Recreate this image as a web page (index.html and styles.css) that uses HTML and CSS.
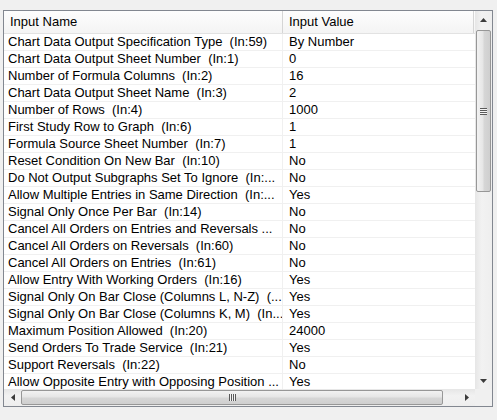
FILE: index.html
```html
<!DOCTYPE html>
<html>
<head>
<meta charset="utf-8">
<link rel="stylesheet" href="styles.css">
</head>
<body>
<div class="wrap">
  <div class="grid">
    <div class="top">
      <div class="table">
        <div class="row head">
          <div class="c1">Input Name</div>
          <div class="c2">Input Value</div>
        </div>
        <div class="row"><div class="c1">Chart Data Output Specification Type  (In:59)</div><div class="c2">By Number</div></div>
        <div class="row"><div class="c1">Chart Data Output Sheet Number  (In:1)</div><div class="c2">0</div></div>
        <div class="row"><div class="c1">Number of Formula Columns  (In:2)</div><div class="c2">16</div></div>
        <div class="row"><div class="c1">Chart Data Output Sheet Name  (In:3)</div><div class="c2">2</div></div>
        <div class="row"><div class="c1">Number of Rows  (In:4)</div><div class="c2">1000</div></div>
        <div class="row"><div class="c1">First Study Row to Graph  (In:6)</div><div class="c2">1</div></div>
        <div class="row"><div class="c1">Formula Source Sheet Number  (In:7)</div><div class="c2">1</div></div>
        <div class="row"><div class="c1">Reset Condition On New Bar  (In:10)</div><div class="c2">No</div></div>
        <div class="row"><div class="c1">Do Not Output Subgraphs Set To Ignore  (In:...</div><div class="c2">No</div></div>
        <div class="row"><div class="c1">Allow Multiple Entries in Same Direction  (In:...</div><div class="c2">Yes</div></div>
        <div class="row"><div class="c1">Signal Only Once Per Bar  (In:14)</div><div class="c2">No</div></div>
        <div class="row"><div class="c1">Cancel All Orders on Entries and Reversals ...</div><div class="c2">No</div></div>
        <div class="row"><div class="c1">Cancel All Orders on Reversals  (In:60)</div><div class="c2">No</div></div>
        <div class="row"><div class="c1">Cancel All Orders on Entries  (In:61)</div><div class="c2">No</div></div>
        <div class="row"><div class="c1">Allow Entry With Working Orders  (In:16)</div><div class="c2">Yes</div></div>
        <div class="row"><div class="c1">Signal Only On Bar Close (Columns L, N-Z)  (...</div><div class="c2">Yes</div></div>
        <div class="row"><div class="c1">Signal Only On Bar Close (Columns K, M)  (In...</div><div class="c2">Yes</div></div>
        <div class="row"><div class="c1">Maximum Position Allowed  (In:20)</div><div class="c2">24000</div></div>
        <div class="row"><div class="c1">Send Orders To Trade Service  (In:21)</div><div class="c2">Yes</div></div>
        <div class="row"><div class="c1">Support Reversals  (In:22)</div><div class="c2">No</div></div>
        <div class="row"><div class="c1">Allow Opposite Entry with Opposing Position ...</div><div class="c2">Yes</div></div>
      </div>
      <div class="vscroll">
        <div class="btn"><svg width="7" height="4" viewBox="0 0 7 4"><path d="M3.5 0 L7 4 L0 4 Z" fill="#3c3c3c"/></svg></div>
        <div class="vtrack">
          <div class="vthumb"><span class="vgrip"></span></div>
        </div>
        <div class="btn"><svg width="7" height="4" viewBox="0 0 7 4"><path d="M0 0 L7 0 L3.5 4 Z" fill="#3c3c3c"/></svg></div>
      </div>
    </div>
    <div class="bottom">
      <div class="hscroll">
        <div class="btn"><svg width="4" height="7" viewBox="0 0 4 7"><path d="M4 0 L4 7 L0 3.5 Z" fill="#3c3c3c"/></svg></div>
        <div class="htrack">
          <div class="hthumb"><span class="hgrip"></span></div>
        </div>
        <div class="btn"><svg width="4" height="7" viewBox="0 0 4 7"><path d="M0 0 L4 3.5 L0 7 Z" fill="#3c3c3c"/></svg></div>
      </div>
      <div class="corner"></div>
    </div>
  </div>
</div>
</body>
</html>
```
FILE: styles.css
```css
body {
  margin: 0;
  background: #f0f0f0;
  font-family: "Liberation Sans", Arial, sans-serif;
  font-size: 13px;
  color: #000;
}
.wrap {
  padding: 10px 0 0 3px;
}
.grid {
  width: 488px;
  height: 395px;
  border: 1px solid #828790;
  background: #fff;
  display: flex;
  flex-direction: column;
}
.top {
  display: flex;
  height: 378px;
}
.table {
  width: 471px;
  overflow: hidden;
}
.row {
  display: grid;
  grid-template-columns: 279px 192px;
  height: 16px;
  line-height: 16px;
  border-bottom: 1px solid #f0f0f0;
}
.row .c1 {
  padding-left: 4px;
  border-right: 1px solid #f0f0f0;
  white-space: pre;
  overflow: hidden;
}
.row .c2 {
  padding-left: 6px;
  white-space: pre;
  overflow: hidden;
}
.row.head {
  height: 22px;
  line-height: 21px;
  background: linear-gradient(#fdfdfd, #f4f4f4);
  border-bottom: 1px solid #e2e2e2;
  grid-template-columns: 279px 191px;
}
.row.head .c1 {
  padding-left: 6px;
  border-right: 1px solid #d5d5d5;
}
.row.head .c2 {
  border-right: 1px solid #d5d5d5;
}
.vscroll {
  width: 17px;
  display: flex;
  flex-direction: column;
  background: linear-gradient(90deg, #e6e6e6, #f2f2f2 40%, #eeeeee);
}
.btn {
  width: 17px;
  height: 17px;
  flex: none;
  display: flex;
  align-items: center;
  justify-content: center;
}
.vtrack {
  flex: 1;
  padding: 2px 1px 0 1px;
}
.vthumb {
  height: 162px;
  box-sizing: border-box;
  border: 1px solid #979797;
  border-radius: 2px;
  background: linear-gradient(90deg, #f2f2f2, #e6e6e6 45%, #d6d6d6 55%, #cfcfcf);
  display: flex;
  align-items: center;
  justify-content: center;
}
.vgrip {
  width: 7px;
  height: 7px;
  background: repeating-linear-gradient(#5a5a5a 0 1px, #f4f4f4 1px 2px);
}
.bottom {
  display: flex;
  height: 17px;
}
.hscroll {
  width: 471px;
  display: flex;
  background: linear-gradient(#e6e6e6, #f2f2f2 40%, #eeeeee);
}
.htrack {
  flex: 1;
  padding: 1px 0;
}
.hthumb {
  width: 422px;
  height: 15px;
  box-sizing: border-box;
  border: 1px solid #979797;
  border-radius: 2px;
  background: linear-gradient(#f2f2f2, #e6e6e6 45%, #d6d6d6 55%, #cfcfcf);
  display: flex;
  align-items: center;
  justify-content: center;
}
.hgrip {
  width: 7px;
  height: 7px;
  background: repeating-linear-gradient(90deg, #5a5a5a 0 1px, #f4f4f4 1px 2px);
}
.corner {
  width: 17px;
  background: #f0f0f0;
}
```
